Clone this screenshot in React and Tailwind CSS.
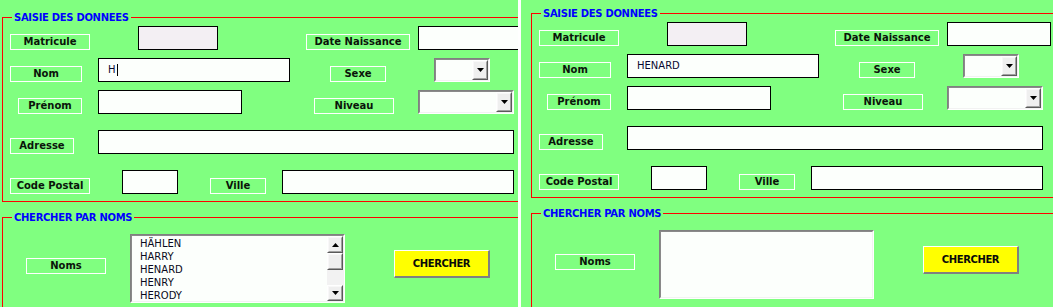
import React from "react";

const NAMES = ["HÄHLEN", "HARRY", "HENARD", "HENRY", "HERODY"];

function Label({ className, children }) {
  return (
    <div
      className={`h-[16px] shrink-0 border border-white flex items-center justify-center text-[10px] leading-none font-bold text-[#0a140a] ${className}`}
    >
      {children}
    </div>
  );
}

function TextBox({ className, value, caret, disabled }) {
  return (
    <div
      className={`h-[24px] shrink-0 border border-black flex items-center pl-[9px] text-[10px] leading-none text-[#0a0a30] ${
        disabled ? "bg-[#f3eff3]" : "bg-[#fcfffc]"
      } ${className}`}
    >
      {value}
      {caret && <span className="ml-[1px] w-px h-[12px] bg-black" />}
    </div>
  );
}

function Arrow({ up }) {
  return (
    <svg width="7" height="4" viewBox="0 0 7 4">
      {up ? (
        <polygon points="0,4 7,4 3.5,0" fill="#000" />
      ) : (
        <polygon points="0,0 7,0 3.5,4" fill="#000" />
      )}
    </svg>
  );
}

function SmallButton({ className, up, children }) {
  return (
    <div
      className={`shrink-0 border border-t-white border-l-white border-r-[#5a5a5a] border-b-[#5a5a5a] ${className}`}
    >
      <div className="h-full border border-t-[#f8f8f8] border-l-[#f8f8f8] border-r-[#a0a0a0] border-b-[#a0a0a0] bg-[#efefef] flex items-center justify-center">
        {children === undefined ? <Arrow up={up} /> : children}
      </div>
    </div>
  );
}

function Combo({ className }) {
  return (
    <div
      className={`h-[24px] shrink-0 border border-t-[#808080] border-l-[#808080] border-r-white border-b-white ${className}`}
    >
      <div className="h-full border border-t-[#8a8a8a] border-l-[#8a8a8a] border-r-[#f2f2f2] border-b-[#f2f2f2] bg-[#fcfffc] flex justify-end">
        <SmallButton className="w-[16px] h-full" />
      </div>
    </div>
  );
}

function ListBox({ items }) {
  return (
    <div className="w-[215px] h-[69px] shrink-0 border border-t-[#808080] border-l-[#808080] border-r-white border-b-white">
      <div className="h-full border border-t-[#8a8a8a] border-l-[#8a8a8a] border-r-[#f2f2f2] border-b-[#f2f2f2] bg-[#fcfffc] flex">
        <div className="flex-1 pl-[8px] pt-[1px] text-[10px] leading-[13px] text-[#0a0a20] overflow-hidden">
          {items.map((n) => (
            <div key={n}>{n}</div>
          ))}
        </div>
        {items.length > 0 && (
          <div className="w-[16px] flex flex-col">
            <SmallButton className="h-[17px]" up />
            <SmallButton className="h-[17px]">{null}</SmallButton>
            <div className="flex-1 bg-[#f2f2f2]" />
            <SmallButton className="h-[16px]" />
          </div>
        )}
      </div>
    </div>
  );
}

function Form({ nom, caret, items }) {
  return (
    <div className="w-[560px] pt-[11px] font-['DejaVu_Sans',sans-serif]">
      <fieldset className="ml-[2px] w-[540px] border border-solid border-[#ff0000] pb-[7px]">
        <legend className="ml-[9px] px-[2px] text-[10px] leading-[13px] font-bold text-[#0000ff] tracking-[-0.3px]">
          SAISIE DES DONNEES
        </legend>
        <div className="pt-[2px] flex flex-col">
          <div className="flex items-end">
            <Label className="ml-[7px] w-[80px]">Matricule</Label>
            <TextBox className="ml-[48px] w-[80px]" disabled />
            <Label className="ml-[88px] w-[104px]">Date Naissance</Label>
            <TextBox className="ml-[8px] w-[104px]" />
          </div>
          <div className="mt-[8px] flex items-end">
            <Label className="ml-[7px] w-[72px]">Nom</Label>
            <TextBox className="ml-[16px] w-[192px]" value={nom} caret={caret} />
            <Label className="ml-[40px] w-[56px]">Sexe</Label>
            <Combo className="ml-[48px] w-[56px]" />
          </div>
          <div className="mt-[8px] flex items-end">
            <Label className="ml-[15px] w-[64px]">Prénom</Label>
            <TextBox className="ml-[16px] w-[144px]" />
            <Label className="ml-[72px] w-[80px]">Niveau</Label>
            <Combo className="ml-[24px] w-[96px]" />
          </div>
          <div className="mt-[16px] flex items-end">
            <Label className="ml-[7px] w-[64px]">Adresse</Label>
            <TextBox className="ml-[24px] w-[416px]" />
          </div>
          <div className="mt-[16px] flex items-end">
            <Label className="ml-[7px] w-[80px]">Code Postal</Label>
            <TextBox className="ml-[32px] w-[56px]" />
            <Label className="ml-[32px] w-[56px]">Ville</Label>
            <TextBox className="ml-[16px] w-[232px]" />
          </div>
        </div>
      </fieldset>

      <fieldset className="mt-[9px] ml-[2px] w-[540px] border border-solid border-[#ff0000] pb-[20px]">
        <legend className="ml-[9px] px-[2px] text-[10px] leading-[13px] font-bold text-[#0000ff] tracking-[-0.3px]">
          CHERCHER PAR NOMS
        </legend>
        <div className="flex items-start">
          <Label className="mt-[34px] ml-[23px] w-[80px]">Noms</Label>
          <div className="mt-[10px] ml-[24px]">
            <ListBox items={items} />
          </div>
          <button className="mt-[26px] ml-[49px] w-[96px] h-[28px] shrink-0 bg-[#ffff00] border-t border-l border-t-white border-l-white border-r-2 border-b-2 border-r-[#808080] border-b-[#808080] text-[10px] leading-none font-bold text-[#0a0a0a] tracking-[-0.4px]">
            CHERCHER
          </button>
        </div>
      </fieldset>
    </div>
  );
}

export default function App() {
  return (
    <div className="flex w-[1053px] h-[307px] gap-[3px] bg-white overflow-hidden">
      <div className="w-[518px] h-full shrink-0 overflow-hidden bg-[#80ff80]">
        <Form nom="H" caret items={NAMES} />
      </div>
      <div className="w-[532px] h-full shrink-0 overflow-hidden bg-[#80ff80]">
        <div className="ml-[8px] -mt-[4px]">
          <Form nom="HENARD" items={[]} />
        </div>
      </div>
    </div>
  );
}
